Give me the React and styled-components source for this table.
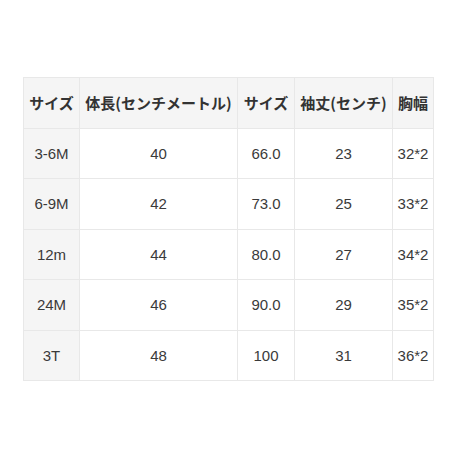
import React from 'react';
import styled, { createGlobalStyle } from 'styled-components';

const GlobalStyle = createGlobalStyle`
  html, body {
    margin: 0;
    padding: 0;
    background: #ffffff;
  }
  body {
    font-family: "Liberation Sans", "Noto Sans CJK JP", sans-serif;
    color: #333333;
  }
`;

const headers = ['サイズ', '体長(センチメートル)', 'サイズ', '袖丈(センチ)', '胸幅'];
const widths = [56, 158, 57, 98, 41];

const rows = [
  ['3-6M', '40', '66.0', '23', '32*2'],
  ['6-9M', '42', '73.0', '25', '33*2'],
  ['12m', '44', '80.0', '27', '34*2'],
  ['24M', '46', '90.0', '29', '35*2'],
  ['3T', '48', '100', '31', '36*2'],
];

export default function App() {
  return (
    <Page>
      <GlobalStyle />
      <Table>
        <colgroup>
          {widths.map((w, i) => (
            <col key={i} style={{ width: w }} />
          ))}
        </colgroup>
        <thead>
          <tr>
            {headers.map((h, i) => (
              <Th key={i}>{h}</Th>
            ))}
          </tr>
        </thead>
        <tbody>
          {rows.map((r, i) => (
            <tr key={i}>
              {r.map((c, j) => (
                <Td key={j} $first={j === 0}>{c}</Td>
              ))}
            </tr>
          ))}
        </tbody>
      </Table>
    </Page>
  );
}

const Page = styled.div`
  width: 460px;
  height: 460px;
  box-sizing: border-box;
  padding: 77px 0 0 23px;
`;

const Table = styled.table`
  border-collapse: collapse;
  table-layout: fixed;
  width: 410px;
`;

const Th = styled.th`
  height: 49.5px;
  padding: 0;
  background: #f5f5f5;
  border: 1px solid #e8e8e8;
  font-family: "Noto Sans CJK JP", "Liberation Sans", sans-serif;
  font-size: 15px;
  font-weight: 700;
  color: #333333;
  text-align: center;
  white-space: nowrap;
`;

const Td = styled.td`
  height: 49.5px;
  padding: 0;
  background: ${(p) => (p.$first ? '#f5f5f5' : '#ffffff')};
  border: 1px solid #e8e8e8;
  font-size: 15px;
  color: #3a3a3a;
  text-align: center;
  white-space: nowrap;
`;
